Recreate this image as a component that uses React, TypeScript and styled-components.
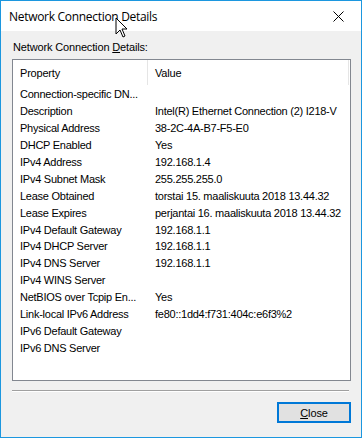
import React from "react";
import styled, { createGlobalStyle } from "styled-components";

const Global = createGlobalStyle`
  html, body { margin: 0; padding: 0; background: #f0f0f0; }
  * { box-sizing: border-box; }
`;

const Window = styled.div`
  position: relative;
  width: 362px;
  height: 438px;
  border: 1px solid #1c97df;
  background: #f0f0f0;
  display: flex;
  flex-direction: column;
  font-family: "Liberation Sans", Arial, sans-serif;
  color: #000;
`;

const TitleBar = styled.div`
  height: 30px;
  background: #fff;
  display: flex;
  align-items: center;
  justify-content: space-between;
  padding: 0 0 0 8px;
`;

const Title = styled.span`
  font-family: "Open Sans", "Noto Sans", sans-serif;
  font-size: 12px;
  color: #000;
  letter-spacing: -0.3px;
`;

const CloseX = styled.div`
  width: 46px;
  height: 30px;
  display: flex;
  align-items: center;
  justify-content: center;
`;

const Body = styled.div`
  flex: 1;
  display: flex;
  flex-direction: column;
  padding: 9px 10px 0 11px;
`;

const GroupLabel = styled.div`
  font-size: 11px;
  line-height: 14px;
  height: 14px;
  margin-bottom: 5px;
  padding-left: 1px;
  letter-spacing: -0.15px;
`;

const ListBox = styled.div`
  width: 339px;
  height: 322px;
  border: 1px solid #828790;
  background: #fff;
  display: flex;
  flex-direction: column;
`;

const HeaderRow = styled.div`
  height: 25px;
  display: grid;
  grid-template-columns: 135px 1fr;
  border-right: 1px solid #e5e5e5;
  margin-right: 1px;
`;

const HeaderCell = styled.div<{ $divider?: boolean }>`
  font-size: 11px;
  letter-spacing: -0.2px;
  display: flex;
  align-items: center;
  padding-left: 7px;
  border-right: ${(p) => (p.$divider ? "1px solid #e5e5e5" : "none")};
`;

const Rows = styled.div`
  padding-top: 1px;
  display: flex;
  flex-direction: column;
`;

const Row = styled.div`
  height: 16.9px;
  display: grid;
  grid-template-columns: 135px 1fr;
  font-size: 11px;
  letter-spacing: -0.25px;
  align-items: center;
  white-space: nowrap;
`;

const Cell = styled.div`
  padding-left: 7px;
`;

const ValueCell = styled.div`
  padding-left: 7px;
`;

const Separator = styled.div`
  margin-top: 9px;
  width: 337px;
  height: 1px;
  background: #a0a0a0;
  border-bottom: 1px solid #fff;
  box-sizing: content-box;
`;

const Footer = styled.div`
  display: flex;
  justify-content: flex-end;
  margin-top: 10px;
`;

const Button = styled.button`
  width: 74px;
  height: 21px;
  border: 2px solid #0078d7;
  background: #e1e1e1;
  font-family: "Liberation Sans", Arial, sans-serif;
  font-size: 11px;
  letter-spacing: -0.1px;
  color: #000;
  padding: 0;
  margin: 0;
`;

const Under = styled.span`
  text-decoration: underline;
`;

const Cursor = styled.svg`
  position: absolute;
  left: 114px;
  top: 16px;
`;

const rows: [string, string][] = [
  ["Connection-specific DN...", ""],
  ["Description", "Intel(R) Ethernet Connection (2) I218-V"],
  ["Physical Address", "38-2C-4A-B7-F5-E0"],
  ["DHCP Enabled", "Yes"],
  ["IPv4 Address", "192.168.1.4"],
  ["IPv4 Subnet Mask", "255.255.255.0"],
  ["Lease Obtained", "torstai 15. maaliskuuta 2018 13.44.32"],
  ["Lease Expires", "perjantai 16. maaliskuuta 2018 13.44.32"],
  ["IPv4 Default Gateway", "192.168.1.1"],
  ["IPv4 DHCP Server", "192.168.1.1"],
  ["IPv4 DNS Server", "192.168.1.1"],
  ["IPv4 WINS Server", ""],
  ["NetBIOS over Tcpip En...", "Yes"],
  ["Link-local IPv6 Address", "fe80::1dd4:f731:404c:e6f3%2"],
  ["IPv6 Default Gateway", ""],
  ["IPv6 DNS Server", ""],
];

export default function App() {
  return (
    <>
      <Global />
      <Window>
        <TitleBar>
          <Title>Network Connection Details</Title>
          <CloseX>
            <svg width="11" height="11" viewBox="0 0 11 11">
              <path d="M0.5 0.5 L10.5 10.5 M10.5 0.5 L0.5 10.5" stroke="#000" strokeWidth="1" />
            </svg>
          </CloseX>
        </TitleBar>
        <Body>
          <GroupLabel>
            Network Connection <Under>D</Under>etails:
          </GroupLabel>
          <ListBox>
            <HeaderRow>
              <HeaderCell $divider>Property</HeaderCell>
              <HeaderCell>Value</HeaderCell>
            </HeaderRow>
            <Rows>
              {rows.map(([k, v]) => (
                <Row key={k}>
                  <Cell>{k}</Cell>
                  <ValueCell>{v}</ValueCell>
                </Row>
              ))}
            </Rows>
          </ListBox>
          <Separator />
          <Footer>
            <Button>
              <Under>C</Under>lose
            </Button>
          </Footer>
        </Body>
        <Cursor width="14" height="22" viewBox="0 0 14 22">
          <path d="M1 1 L1 17 L5 13 L8 20 L10 19 L7 12 L12 12 Z" fill="#fff" stroke="#000" strokeWidth="1" strokeLinejoin="miter" />
        </Cursor>
      </Window>
    </>
  );
}
